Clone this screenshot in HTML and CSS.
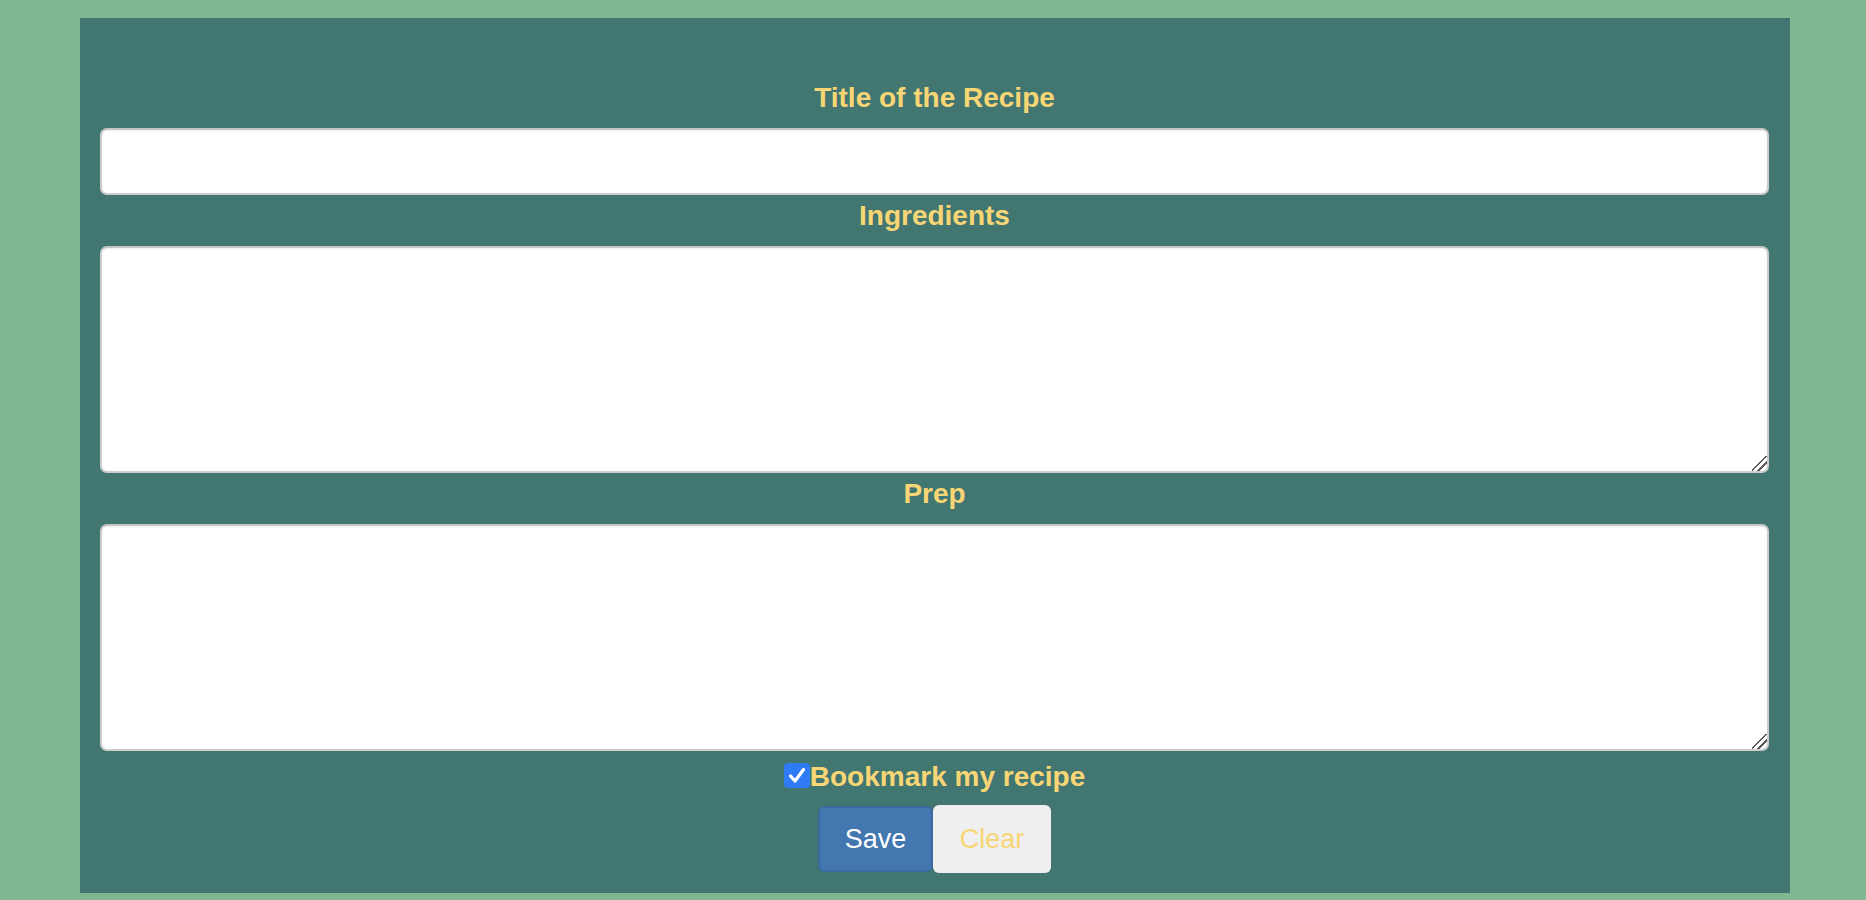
FILE: index.html
```html
<!DOCTYPE html>
<html lang="en">
<head>
<meta charset="utf-8">
<title>Recipe</title>
<link rel="stylesheet" href="styles.css">
</head>
<body>
<main class="panel">
  <form class="recipe-form">
    <label class="field-label" for="title">Title of the Recipe</label>
    <input class="field-input" id="title" type="text">
    <label class="field-label" for="ingredients">Ingredients</label>
    <textarea class="field-area" id="ingredients"></textarea>
    <label class="field-label" for="prep">Prep</label>
    <textarea class="field-area last" id="prep"></textarea>
    <label class="bookmark">
      <span class="check-box"><svg viewBox="0 0 26 25" width="26" height="25"><path d="M6.5 13 L11 18 L19.5 6.5" fill="none" stroke="#fff" stroke-width="3.2" stroke-linecap="round" stroke-linejoin="round"/></svg></span>Bookmark my recipe
    </label>
    <div class="actions">
      <button type="button" class="btn btn-save">Save</button>
      <button type="button" class="btn btn-clear">Clear</button>
    </div>
  </form>
</main>
</body>
</html>
```

FILE: styles.css
```css
html, body {
  margin: 0;
  padding: 0;
}

html {
  background: #80b790;
  height: 900px;
  overflow: hidden;
}

body {
  font-family: "Liberation Sans", Arial, Helvetica, sans-serif;
  padding-top: 18px;
}

.panel {
  margin: 0 0 0 80px;
  width: 1710px;
  height: 875px;
  box-sizing: border-box;
  background: #427671;
  padding: 64px 21px 0 20px;
}

.recipe-form {
  display: flex;
  flex-direction: column;
}

.field-label {
  display: block;
  text-align: center;
  color: #f8d675;
  font-size: 28px;
  font-weight: bold;
  line-height: 32px;
  margin-bottom: 14px;
}

.field-input,
.field-area {
  display: block;
  box-sizing: border-box;
  width: 100%;
  background: #fff;
  border: 2px solid #cdcdcd;
  border-top-color: #c4c4c4;
  border-radius: 7px;
  box-shadow: inset 0 1px 2px rgba(0, 0, 0, 0.08);
  margin: 0 0 5px 0;
  font-family: inherit;
  font-size: 20px;
  padding: 4px 8px;
}

.field-input {
  height: 67px;
}

.field-area {
  height: 227px;
  resize: vertical;
}

.field-area::-webkit-resizer {
  background: linear-gradient(135deg, transparent 0 44%, #5a5a5a 44% 52%, transparent 52% 66%, #5a5a5a 66% 74%, transparent 74%);
}

.field-area.last {
  margin-bottom: 10px;
}

.bookmark {
  display: flex;
  justify-content: center;
  align-items: center;
  color: #f8d675;
  font-size: 28px;
  font-weight: bold;
  line-height: 32px;
  margin-bottom: 12px;
}

.check-box {
  display: inline-flex;
  width: 26px;
  height: 25px;
  background: #2f7af5;
  border-radius: 4px;
  margin-top: -4px;
}

.actions {
  display: flex;
  justify-content: center;
  align-items: center;
}

.btn {
  font-family: inherit;
  font-size: 27px;
  border-radius: 6px;
  cursor: pointer;
}

.btn-save {
  width: 115px;
  height: 66px;
  background: #4377b0;
  border: 2px solid #3b6aa0;
  color: #fff;
}

.btn-clear {
  width: 118px;
  height: 68px;
  background: #efefef;
  border: none;
  color: #f8d675;
}
```
